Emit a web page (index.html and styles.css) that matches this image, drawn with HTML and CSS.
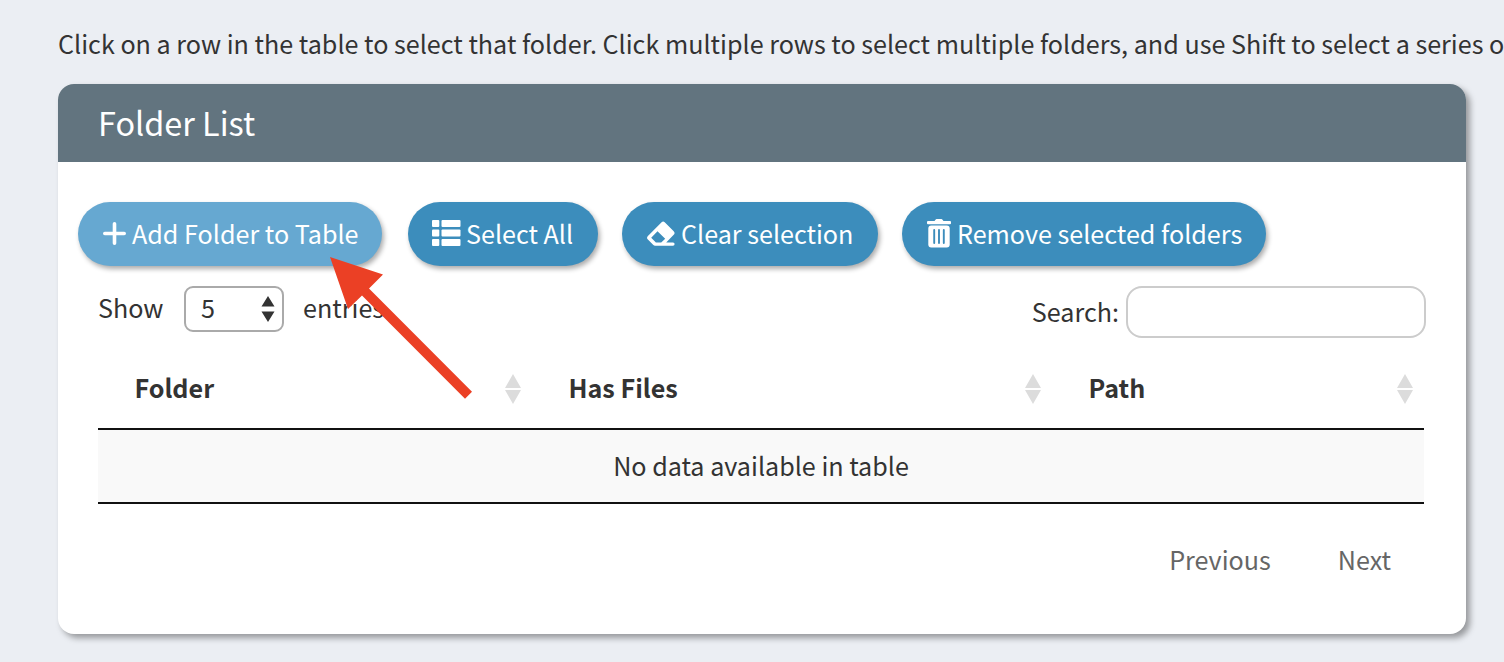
FILE: index.html
```
<!DOCTYPE html>
<html lang="en">
<head>
<meta charset="utf-8">
<title>Folder List</title>
<link rel="stylesheet" href="styles.css">
</head>
<body>
<p class="intro">Click on a row in the table to select that folder. Click multiple rows to select multiple folders, and use Shift to select a series o</p>
<section class="box">
  <header class="box-header"><h3 class="box-title">Folder List</h3></header>
  <div class="box-body">
    <div class="actions">
      <button class="btn btn-add"><svg class="icon" width="23" height="23" viewBox="0 0 23 23"><path d="M11.500 1.800v19.400M1.800 11.500h19.400" stroke="#fff" stroke-width="3.600" stroke-linecap="round"/></svg><span>Add Folder to Table</span></button>
      <button class="btn btn-all"><svg class="icon" width="29" height="26" viewBox="0 0 29 26" fill="#fff"><rect width="7.300" height="7" rx="1"/><rect x="9.500" width="19" height="7" rx="1"/><rect y="9.500" width="7.300" height="7" rx="1"/><rect x="9.500" y="9.500" width="19" height="7" rx="1"/><rect y="19" width="7.300" height="7" rx="1"/><rect x="9.500" y="19" width="19" height="7" rx="1"/></svg><span>Select All</span></button>
      <button class="btn btn-clear"><svg class="icon" width="28" height="25" viewBox="0 0 28 25"><path fill="#fff" fill-rule="evenodd" d="M14.600 1.200a2.200 2.200 0 0 1 3.100 0l9 9a2.600 2.600 0 0 1 0 3.600L19.200 21.500H26a1.600 1.600 0 0 1 0 3.200H8.200a3 3 0 0 1-2.100-.9L.9 18.600a2.700 2.700 0 0 1 0-3.700zM10.500 10.300L4.200 16.700l4.700 4.800h5.300l4-3.700z"/></svg><span>Clear selection</span></button>
      <button class="btn btn-remove"><svg class="icon" width="24" height="29" viewBox="0 0 24 29"><path fill="#fff" d="M1 2h6.500l1-1.300A1.500 1.500 0 0 1 9.600 0h4.800a1.500 1.500 0 0 1 1.100.7l1 1.300H23a1 1 0 0 1 1 1v1.300a1 1 0 0 1-1 1H1a1 1 0 0 1-1-1V3a1 1 0 0 1 1-1z"/><rect x="1.300" y="6.600" width="21.400" height="22" rx="3" fill="#fff"/><path d="M7.200 11v13M12 11v13M16.800 11v13" stroke="#3c8dbc" stroke-width="1.900" stroke-linecap="round"/></svg><span>Remove selected folders</span></button>
    </div>
    <div class="controls">
      <div class="length"><span class="show">Show</span><span class="select"><span class="value">5</span><svg width="14" height="26" viewBox="0 0 14 26" fill="#333"><path d="M7 0l6.500 10.500H.5zM7 26l6.500-10.500H.5z"/></svg></span><span class="entries">entries</span></div>
      <label class="filter"><span class="filter-label">Search:</span><input class="search" type="text"></label>
    </div>
    <table class="table">
      <colgroup><col class="col-folder"><col class="col-files"><col></colgroup>
      <thead><tr>
        <th><div class="th"><span class="name">Folder</span><svg class="sort" width="16" height="30" viewBox="0 0 16 30"><path d="M8 0l8 14H0zM8 30l8-14H0z"/></svg></div></th>
        <th><div class="th"><span class="name">Has Files</span><svg class="sort" width="16" height="30" viewBox="0 0 16 30"><path d="M8 0l8 14H0zM8 30l8-14H0z"/></svg></div></th>
        <th><div class="th"><span class="name">Path</span><svg class="sort" width="16" height="30" viewBox="0 0 16 30"><path d="M8 0l8 14H0zM8 30l8-14H0z"/></svg></div></th>
      </tr></thead>
      <tbody><tr><td colspan="3">No data available in table</td></tr></tbody>
    </table>
    <nav class="pager"><span class="prev">Previous</span><span class="next">Next</span></nav>
  </div>
</section>
<svg class="arrow" width="142" height="142" viewBox="0 0 142 142"><path fill="#eb4025" d="M0 0l53 17.500-14 14L142 134.800l-7 7L32 38.500 18 52z"/></svg>
</body>
</html>
```
FILE: styles.css
```
* { box-sizing: border-box; }
body {
  margin: 0;
  height: 662px;
  overflow: hidden;
  background: #ebeef3;
  color: #333;
  font-family: "Noto Sans CJK SC", "Open Sans", sans-serif;
  font-size: 25.14px;
  line-height: 40px;
}
.intro {
  margin: 0;
  padding: 23px 0 21px 58px;
  white-space: nowrap;
}
.box {
  width: 1408px;
  height: 550px;
  margin-left: 58px;
  border-radius: 16px;
  background: #fff;
  box-shadow: 4px 4px 6px rgba(0, 0, 0, .36);
}
.box-header {
  height: 78px;
  padding: 18px 40px;
  border-radius: 16px 16px 0 0;
  background: #62747f;
  color: #fff;
}
.box-title { margin: 0; font-size: 32.4px; font-weight: 400; line-height: 40px; }
.box-body { padding: 40px 40px 0; }
.actions { display: flex; margin-left: -20px; }
.btn {
  display: flex;
  align-items: center;
  height: 64px;
  border: 0;
  border-radius: 32px;
  padding: 0 0 2px 25px;
  gap: 6px;
  background: #3c8dbc;
  color: #fff;
  font: inherit;
  white-space: nowrap;
  box-shadow: 2px 3px 5px rgba(0, 0, 0, .33);
}
.icon { flex: none; }
.btn-add { width: 304px; margin-right: 26px; background: #66a8d1; }
.btn-all { width: 190px; margin-right: 24px; padding-left: 24px; gap: 5px; }
.btn-clear { width: 256px; margin-right: 24px; }
.btn-remove { width: 364px; }
.controls {
  display: flex;
  justify-content: space-between;
  align-items: flex-start;
  padding-top: 20px;
  height: 84px;
}
.length { display: flex; align-items: center; height: 46px; }
.show { width: 86px; }
.show, .entries, .value, .name { padding-bottom: 4px; }
.select {
  display: flex;
  align-items: center;
  justify-content: space-between;
  width: 100px;
  height: 46px;
  margin-right: 19px;
  padding: 0 7px 0 15px;
  border: 2px solid #aaa;
  border-radius: 9px;
}
.filter { display: flex; align-items: center; gap: 7px; }
.filter-label { padding-bottom: 2px; }
.search {
  width: 300px;
  height: 52px;
  border: 2px solid #ccc;
  border-radius: 16px;
  background: #fff;
}
.table { width: 1326px; table-layout: fixed; border-collapse: separate; border-spacing: 0; border-bottom: 2px solid #111; }
.col-folder { width: 434px; }
.col-files { width: 520px; }
th { height: 80px; padding: 0 11px 0 36.500px; border-bottom: 2px solid #111; text-align: left; font-weight: 700; }
.th { display: flex; align-items: center; justify-content: space-between; }
.sort { fill: #dcdcdc; }
td { height: 72px; padding: 0 0 2px; background: #f9f9f9; text-align: center; }
.pager { display: flex; justify-content: flex-end; gap: 67px; padding: 35px 35px 0 0; color: #666; }
.arrow { position: absolute; left: 330px; top: 257px; }
```
